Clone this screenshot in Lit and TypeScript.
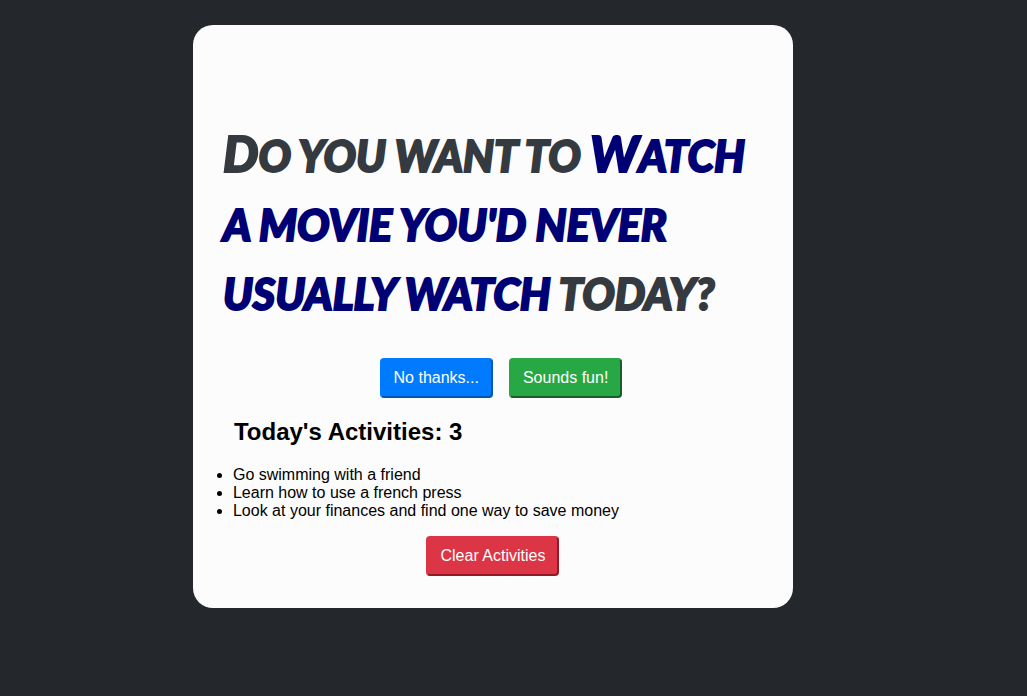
import { LitElement, html, css } from "lit";
import { customElement, state } from "lit/decorators.js";

@customElement("app-root")
export class AppRoot extends LitElement {
  static styles = css`
    :host {
      display: block;
      box-sizing: border-box;
      min-height: 100vh;
      padding: 25px 4% 25px 0;
      background: #24282c;
      color: #000;
      font-family: "Liberation Sans", Arial, sans-serif;
      font-size: 16px;
      line-height: 18px;
    }
    .card {
      box-sizing: border-box;
      max-width: 600px;
      margin: 0 auto;
      padding: 94px 30px 32px;
      border-radius: 20px;
      background: #fcfcfc;
    }
    .question {
      margin: 0;
      color: #343a40;
      font-family: "Permanent Marker", Lato, sans-serif;
      font-size: 43px;
      font-weight: 900;
      font-style: italic;
      line-height: 69px;
      text-transform: uppercase;
      -webkit-text-stroke: 2px currentColor;
      stroke-linejoin: round;
    }
    .lead {
      display: inline-block;
    }
    .lead::first-letter {
      font-size: 50px;
    }
    .activity {
      color: #000075;
    }
    .actions {
      display: flex;
      justify-content: center;
    }
    .choices {
      margin-top: 30px;
    }
    .choice {
      margin-left: 16px;
    }
    button {
      height: 40px;
      padding: 0 12px;
      border: 2px solid;
      border-radius: 4px;
      color: #fff;
      font: inherit;
      cursor: pointer;
    }
    .skip {
      background: #007bff;
      border-color: #007bff #0056b3 #0056b3 #007bff;
    }
    .accept {
      background: #28a745;
      border-color: #28a745 #1a5c2a #1a5c2a #28a745;
    }
    .clear {
      background: #dc3545;
      border-color: #dc3545 #921925 #921925 #dc3545;
    }
    .subtitle {
      margin: 20px 0 0 11px;
      font-size: 24px;
      line-height: 28px;
    }
    .list {
      margin: 20px 0 16px;
      padding-left: 10px;
    }
  `;

  @state() private activities = [
    "Go swimming with a friend",
    "Learn how to use a french press",
    "Look at your finances and find one way to save money",
  ];

  private suggestion = "Watch a movie you'd never usually watch";

  private accept() {
    this.activities = [...this.activities, this.suggestion];
  }

  private clear() {
    this.activities = [];
  }

  render() {
    const [first, ...rest] = this.suggestion.split(" ");
    return html`
      <main class="card">
        <h1 class="question">
          <span class="lead">Do</span> you want to
          <span class="activity"><span class="lead">${first}</span> ${rest.join(" ")}</span>
          today?
        </h1>
        <div class="actions choices">
          <button class="choice skip" type="button">No thanks...</button>
          <button class="choice accept" type="button" @click=${this.accept}>Sounds fun!</button>
        </div>
        <h2 class="subtitle">Today's Activities: ${this.activities.length}</h2>
        <ul class="list">
          ${this.activities.map((item) => html`<li>${item}</li>`)}
        </ul>
        <div class="actions">
          <button class="clear" type="button" @click=${this.clear}>Clear Activities</button>
        </div>
      </main>
    `;
  }
}
